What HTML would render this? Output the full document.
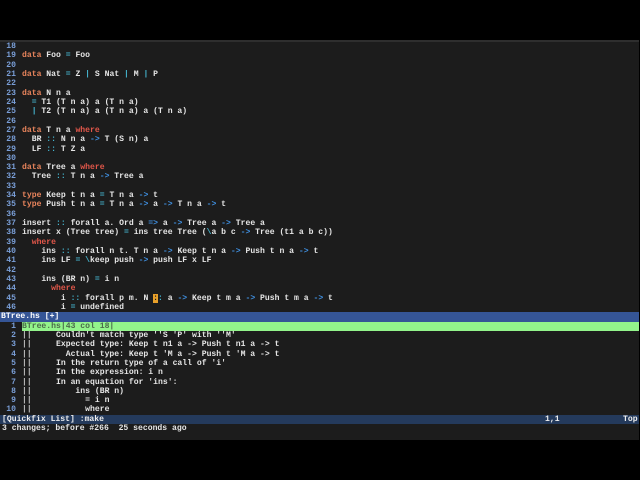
<!DOCTYPE html>
<html><head><meta charset="utf-8"><style>
html,body{margin:0;padding:0;background:#000;width:640px;height:480px;overflow:hidden}
#win{position:absolute;left:0;top:40px;width:639px;height:398px;background:#1c1c1c;border-top:2px solid #2e2e2e}
.l{position:absolute;left:0;height:9.32px;line-height:9.32px;font-family:"Liberation Mono",monospace;font-size:8.1px;font-weight:bold;color:#e6e6e6;white-space:pre;width:639px}
.n{display:inline-block;width:16px;text-align:right;color:#7a9fd8;margin-right:6px}
.k{color:#e8845c}.w{color:#e2574a}.o{color:#45b5cf}.a{color:#3f8fe0}
.g{color:#bbb}
.st{background:#355596;color:#fff;padding-left:1px;width:638px}
.qf{background:#93f48b;color:#4b6b4b}
.bs{background:#243a5c;color:#eee;padding-left:2px;width:637px}
.cur{background:#e8a02a;color:#1c1c1c}
.m{padding-left:2px}
</style></head><body>
<div id="win"></div>
<div id="c"></div>
<script>
var L=[
["18",""],
["19",'<span class="k">data</span> Foo <span class="o">=</span> Foo'],
["20",""],
["21",'<span class="k">data</span> Nat <span class="o">=</span> Z <span class="o">|</span> S Nat <span class="o">|</span> M <span class="o">|</span> P'],
["22",""],
["23",'<span class="k">data</span> N n a'],
["24",'  <span class="o">=</span> T1 (T n a) a (T n a)'],
["25",'  <span class="o">|</span> T2 (T n a) a (T n a) a (T n a)'],
["26",""],
["27",'<span class="k">data</span> T n a <span class="w">where</span>'],
["28",'  BR <span class="o">::</span> N n a <span class="a">-&gt;</span> T (S n) a'],
["29",'  LF <span class="o">::</span> T Z a'],
["30",""],
["31",'<span class="k">data</span> Tree a <span class="w">where</span>'],
["32",'  Tree <span class="o">::</span> T n a <span class="a">-&gt;</span> Tree a'],
["33",""],
["34",'<span class="k">type</span> Keep t n a <span class="o">=</span> T n a <span class="a">-&gt;</span> t'],
["35",'<span class="k">type</span> Push t n a <span class="o">=</span> T n a <span class="a">-&gt;</span> a <span class="a">-&gt;</span> T n a <span class="a">-&gt;</span> t'],
["36",""],
["37",'insert <span class="o">::</span> forall a. Ord a <span class="a">=&gt;</span> a <span class="a">-&gt;</span> Tree a <span class="a">-&gt;</span> Tree a'],
["38",'insert x (Tree tree) <span class="o">=</span> ins tree Tree (<span class="o">\\</span>a b c <span class="a">-&gt;</span> Tree (t1 a b c))'],
["39",'  <span class="w">where</span>'],
["40",'    ins <span class="o">::</span> forall n t. T n a <span class="a">-&gt;</span> Keep t n a <span class="a">-&gt;</span> Push t n a <span class="a">-&gt;</span> t'],
["41",'    ins LF <span class="o">=</span> <span class="o">\\</span>keep push <span class="a">-&gt;</span> push LF x LF'],
["42",""],
["43",'    ins (BR n) <span class="o">=</span> i n'],
["44",'      <span class="w">where</span>'],
["45",'        i <span class="o">::</span> forall p m. N <span class="cur">:</span><span class="o">:</span> a <span class="a">-&gt;</span> Keep t m a <span class="a">-&gt;</span> Push t m a <span class="a">-&gt;</span> t'],
["46",'        i <span class="o">=</span> undefined']
];
var Q=[
"||     Couldn't match type ''S 'P' with ''M'",
"||     Expected type: Keep t n1 a -&gt; Push t n1 a -&gt; t",
"||       Actual type: Keep t 'M a -&gt; Push t 'M a -&gt; t",
"||     In the return type of a call of 'i'",
"||     In the expression: i n",
"||     In an equation for 'ins':",
"||         ins (BR n)",
"||           = i n",
"||           where"
];
var h="",y=42,lh=9.32;
L.forEach(function(r){h+='<div class="l" style="top:'+y.toFixed(2)+'px"><span class="n">'+r[0]+'</span>'+r[1]+'</div>';y+=lh;});
h+='<div class="l st" style="top:'+y.toFixed(2)+'px">BTree.hs [+]</div>';y+=lh;
h+='<div class="l" style="top:'+y.toFixed(2)+'px"><span class="n">1</span><span class="qf" style="display:inline-block;width:617px">BTree.hs|43 col 18|</span></div>';y+=lh;
Q.forEach(function(s,i){h+='<div class="l" style="top:'+y.toFixed(2)+'px"><span class="n">'+(i+2)+'</span><span class="g">||</span>'+s.slice(2)+'</div>';y+=lh;});
h+='<div class="l bs" style="top:'+y.toFixed(2)+'px">[Quickfix List] :make<span style="position:absolute;left:545px">1,1</span><span style="position:absolute;left:623px">Top</span></div>';y+=lh;
h+='<div class="l m" style="top:'+y.toFixed(2)+'px">3 changes; before #266  25 seconds ago</div>';
document.getElementById("c").innerHTML=h;
</script>
</body></html>
